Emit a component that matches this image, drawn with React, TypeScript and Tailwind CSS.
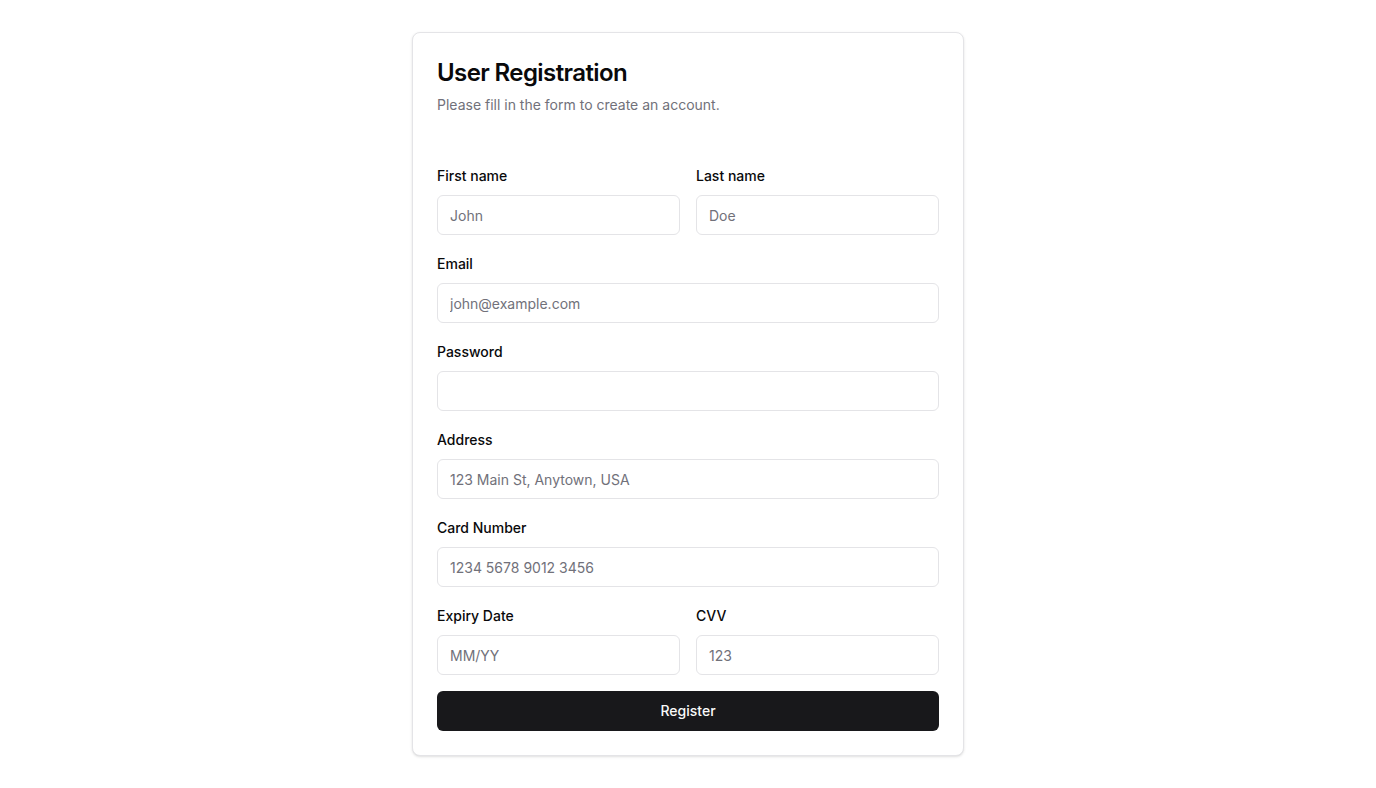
import React from 'react';

const Field: React.FC<{ label: string; placeholder?: string; type?: string; id: string }> = ({ label, placeholder, type = 'text', id }) => (
  <div className="flex flex-col">
    <label htmlFor={id} className="text-sm leading-5 font-medium text-[#09090b] mb-[9px]">
      {label}
    </label>
    <input
      id={id}
      type={type}
      placeholder={placeholder}
      className="h-10 w-full rounded-md border border-[#e4e4e7] bg-white px-3 text-sm text-[#09090b] placeholder:text-[#71717a] outline-none"
    />
  </div>
);

export default function App() {
  return (
    <div className="min-h-screen bg-white pt-8" style={{ fontFamily: 'Inter, "Noto Sans", sans-serif' }}>
      <div className="mx-auto w-[552px] rounded-lg border border-[#e4e4e7] bg-white p-6 shadow-sm">
        <div className="flex flex-col gap-1.5">
          <h1 className="text-2xl leading-8 font-semibold tracking-tight text-[#09090b]">User Registration</h1>
          <p className="text-sm leading-5 text-[#71717a]">Please fill in the form to create an account.</p>
        </div>

        <form className="mt-[51px] flex flex-col gap-[19px]" onSubmit={e => e.preventDefault()}>
          <div className="grid grid-cols-2 gap-4">
            <Field id="first" label="First name" placeholder="John" />
            <Field id="last" label="Last name" placeholder="Doe" />
          </div>
          <Field id="email" label="Email" placeholder="john@example.com" type="email" />
          <Field id="password" label="Password" type="password" />
          <Field id="address" label="Address" placeholder="123 Main St, Anytown, USA" />
          <Field id="card" label="Card Number" placeholder="1234 5678 9012 3456" />
          <div className="flex flex-col gap-4">
            <div className="grid grid-cols-2 gap-4">
              <Field id="expiry" label="Expiry Date" placeholder="MM/YY" />
              <Field id="cvv" label="CVV" placeholder="123" />
            </div>
            <button
              type="submit"
              className="h-10 w-full rounded-md bg-[#18181b] text-sm font-medium text-[#fafafa]"
            >
              Register
            </button>
          </div>
        </form>
      </div>
    </div>
  );
}
